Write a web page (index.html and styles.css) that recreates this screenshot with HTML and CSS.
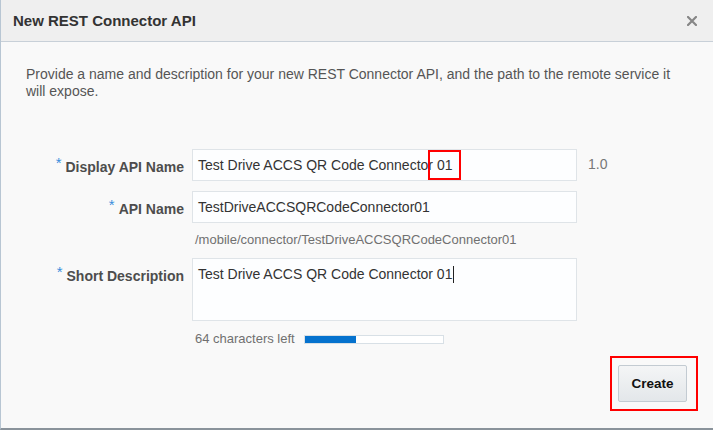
FILE: index.html
```html
<!DOCTYPE html>
<html lang="en">
<head>
<meta charset="utf-8">
<title>New REST Connector API</title>
<link rel="stylesheet" href="styles.css">
</head>
<body>
<div class="dialog">
  <div class="header">
    <div class="title">New REST Connector API</div>
    <svg class="close" width="10" height="10" viewBox="0 0 10 10" aria-label="Close">
      <path d="M1 1 L9 9 M9 1 L1 9" stroke="#868686" stroke-width="2.2" stroke-linecap="square" fill="none"/>
    </svg>
  </div>
  <div class="content">
    <p class="intro">Provide a name and description for your new REST Connector API, and the path to the remote service it will expose.</p>
    <div class="form">
      <div class="row">
        <div class="label"><span class="req">*</span>Display API Name</div>
        <div class="field input">Test Drive ACCS QR Code Connector <span class="mark">01</span></div>
        <div class="version">1.0</div>
      </div>
      <div class="row">
        <div class="label"><span class="req">*</span>API Name</div>
        <div class="field input">TestDriveACCSQRCodeConnector01</div>
      </div>
      <div class="row">
        <div class="label"></div>
        <div class="hint">/mobile/connector/TestDriveACCSQRCodeConnector01</div>
      </div>
      <div class="row top">
        <div class="label lbl-top"><span class="req">*</span>Short Description</div>
        <div class="field textarea">Test Drive ACCS QR Code Connector 01<span class="caret"></span></div>
      </div>
      <div class="row">
        <div class="label"></div>
        <div class="count">
          <span class="count-text">64 characters left</span>
          <div class="bar"><div class="bar-fill" style="width: 51px"></div></div>
        </div>
      </div>
    </div>
    <div class="actions">
      <div class="highlight"><button class="btn">Create</button></div>
    </div>
  </div>
</div>
</body>
</html>
```

FILE: styles.css
```css
html, body {
  margin: 0;
  padding: 0;
}
body {
  font-family: "Liberation Sans", Arial, sans-serif;
  background: #f9f9f9;
}
.dialog {
  width: 713px;
  height: 430px;
  box-sizing: border-box;
  border-left: 1px solid #b8c6d3;
  border-bottom: 2px solid #8a939b;
  background: #f9f9f9;
  display: flex;
  flex-direction: column;
}
.header {
  height: 41px;
  border-bottom: 1px solid #c8d0d8;
  background: #efefef;
  display: flex;
  align-items: center;
  justify-content: space-between;
  padding: 0 16px 0 12px;
}
.title {
  font-size: 15px;
  font-weight: bold;
  color: #333;
  margin-top: -1px;
}
.close {
  display: block;
  margin-top: 1px;
}
.content {
  padding: 24px 15px 0 25px;
}
.intro {
  margin: 0;
  font-size: 14px;
  line-height: 17px;
  color: #555;
  padding-right: 20px;
}
.form {
  margin-top: 49px;
  display: flex;
  flex-direction: column;
}
.row {
  display: flex;
  align-items: center;
}
.row.top {
  align-items: flex-start;
}
.label {
  width: 166px;
  box-sizing: border-box;
  padding-right: 8px;
  text-align: right;
  font-size: 14px;
  font-weight: bold;
  color: #4d4d4d;
  line-height: 17px;
  flex: none;
}
.lbl-top {
  padding-top: 5px;
}
.req {
  color: #3a8edc;
  font-weight: normal;
  font-size: 15px;
  vertical-align: 4px;
  margin-right: 4px;
}
.field {
  width: 385px;
  box-sizing: border-box;
  border: 1px solid #dfe4e8;
  background: #fdfeff;
  font-size: 14px;
  color: #333;
  padding: 0 5px;
  flex: none;
}
.input {
  height: 32px;
  line-height: 30px;
}
.row + .row {
  margin-top: 10px;
}
.row:nth-child(3) {
  margin-top: 9px;
}
.mark {
  position: relative;
}
.mark::after {
  content: "";
  position: absolute;
  left: -9px;
  right: -9px;
  top: -7px;
  bottom: -7px;
  border: 2px solid #f00;
}
.version {
  margin-left: 11px;
  font-size: 14px;
  color: #777;
  margin-top: -3px;
}
.hint {
  padding-left: 3px;
  font-size: 13px;
  line-height: 16px;
  color: #707070;
}
.textarea {
  height: 63px;
  padding-top: 7px;
  line-height: 17px;
}
.caret {
  display: inline-block;
  width: 1px;
  height: 17px;
  background: #222;
  vertical-align: top;
  margin-left: 1px;
}
.count {
  display: flex;
  align-items: center;
  gap: 9px;
  padding-left: 3px;
}
.count-text {
  font-size: 13px;
  line-height: 16px;
  color: #707070;
}
.bar {
  width: 140px;
  height: 9px;
  box-sizing: border-box;
  border: 1px solid #d8e0e6;
  background: #fff;
  margin-top: 1px;
}
.bar-fill {
  height: 100%;
  background: #0572ce;
}
.actions {
  display: flex;
  justify-content: flex-end;
  margin-top: 9px;
}
.highlight {
  border: 2px solid #f00;
  padding: 7px 9px 7px 6px;
  display: flex;
}
.btn {
  width: 69px;
  height: 37px;
  box-sizing: border-box;
  border: 1px solid #c3cbd2;
  border-radius: 2px;
  background: linear-gradient(#f4f5f6, #e3e7ea);
  font-family: "Liberation Sans", Arial, sans-serif;
  font-size: 13.5px;
  font-weight: bold;
  color: #111;
  padding: 0;
}
```
